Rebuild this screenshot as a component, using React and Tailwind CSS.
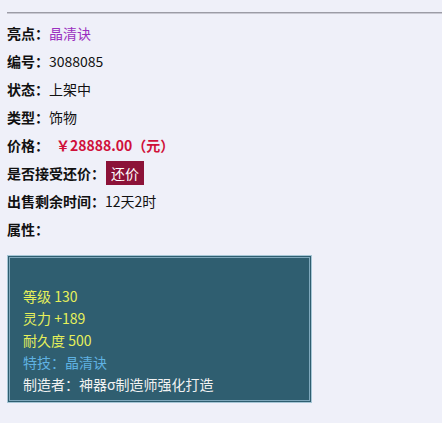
import React from "react";

const font = { fontFamily: '"Noto Sans CJK SC", "Liberation Sans", sans-serif' };

const rows = [
  { label: "亮点：", value: <span className="text-[#9b2fc0]">晶清诀</span> },
  { label: "编号：", value: <span>3088085</span> },
  { label: "状态：", value: <span>上架中</span> },
  { label: "类型：", value: <span>饰物</span> },
  {
    label: "价格：",
    value: <span className="ml-[7px] font-bold text-[#d0103a]">￥28888.00（元）</span>,
  },
  {
    label: "是否接受还价：",
    value: (
      <button className="ml-px h-[24px] w-[38px] bg-[#8c1238] text-[14px] text-white leading-none">
        还价
      </button>
    ),
  },
  { label: "出售剩余时间：", value: <span>12天2时</span> },
  { label: "属性：", value: null },
];

export default function App() {
  return (
    <div className="h-[423px] w-[442px] overflow-hidden bg-[#eff0f9] pt-[12px] text-[14px] text-[#111]" style={font}>
      <div className="ml-[7px] h-[2px] border-t border-b border-t-[#9c9ca6] border-b-[#c8c8d2]" />
      <div className="pl-[7px] pt-[5px]">
        {rows.map((r, i) => (
          <div key={i} className="flex h-[28px] items-center">
            <span className="font-bold">{r.label}</span>
            {r.value}
          </div>
        ))}
      </div>
      <div className="ml-[7px] mt-[12px] w-[305px] border border-[#a6c6d6] bg-[#2f5e70] p-px">
        <div className="border border-[#7fa8bc] bg-[#2f5e70] pb-[5px] pl-[13px] pt-[27px] leading-[22px]">
          <div className="text-[#e6f05a]">等级 130</div>
          <div className="text-[#e6f05a]">灵力 +189</div>
          <div className="text-[#e6f05a]">耐久度 500</div>
          <div className="text-[#5fb2e2]">特技：晶清诀</div>
          <div className="text-[#f2f2f2]">制造者：神器σ制造师强化打造</div>
        </div>
      </div>
    </div>
  );
}
